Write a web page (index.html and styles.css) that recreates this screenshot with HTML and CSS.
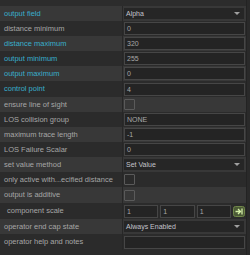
FILE: index.html
```html
<!DOCTYPE html>
<html>
<head>
<meta charset="utf-8">
<link rel="stylesheet" href="styles.css">
</head>
<body>
<div class="wrap">
  <div class="panel">
    <div class="row light"><div class="lbl hi">output field</div><div class="val"><div class="select"><span>Alpha</span><span class="arrow"></span></div></div></div>
    <div class="row dark"><div class="lbl">distance minimum</div><div class="val"><div class="input">0</div></div></div>
    <div class="row light"><div class="lbl hi">distance maximum</div><div class="val"><div class="input">320</div></div></div>
    <div class="row dark"><div class="lbl hi">output minimum</div><div class="val"><div class="input">255</div></div></div>
    <div class="row light"><div class="lbl hi">output maximum</div><div class="val"><div class="input">0</div></div></div>
    <div class="row dark r16"><div class="lbl hi">control point</div><div class="val"><div class="input">4</div></div></div>
    <div class="row light"><div class="lbl">ensure line of sight</div><div class="val"><div class="check"></div></div></div>
    <div class="row dark"><div class="lbl">LOS collision group</div><div class="val"><div class="input">NONE</div></div></div>
    <div class="row light"><div class="lbl">maximum trace length</div><div class="val"><div class="input">-1</div></div></div>
    <div class="row dark"><div class="lbl">LOS Failure Scalar</div><div class="val"><div class="input">0</div></div></div>
    <div class="row light"><div class="lbl">set value method</div><div class="val"><div class="select"><span>Set Value</span><span class="arrow"></span></div></div></div>
    <div class="row dark"><div class="lbl">only active with...ecified distance</div><div class="val"><div class="check"></div></div></div>
    <div class="row light r16"><div class="lbl">output is additive</div><div class="val"><div class="check"></div></div></div>
    <div class="row dark r16"><div class="lbl indent">component scale</div><div class="val"><div class="triple"><div class="input">1</div><div class="input">1</div><div class="input">1</div><span class="apply"><svg width="12" height="11" viewBox="0 0 12 11"><rect x="0.5" y="0.5" width="11" height="10" rx="2" fill="#4b5a36" stroke="#6f8648"/><path d="M2.5 5.5H7M5 3L7.5 5.5L5 8" fill="none" stroke="#d6f0a8" stroke-width="1.3"/><path d="M9 2.5V8.5" stroke="#d6f0a8" stroke-width="1.3"/></svg></span></div></div></div>
    <div class="row light"><div class="lbl">operator end cap state</div><div class="val"><div class="select"><span>Always Enabled</span><span class="arrow"></span></div></div></div>
    <div class="row dark r16"><div class="lbl">operator help and notes</div><div class="val"><div class="input"></div></div></div>
  </div>
  <div class="scroll"></div>
</div>
</body>
</html>
```
FILE: styles.css
```css
html, body {
  margin: 0;
  padding: 0;
  background: #2b2b2b;
  width: 250px;
  height: 255px;
  overflow: hidden;
  font-family: "Liberation Sans", Arial, sans-serif;
}
.wrap {
  display: flex;
  width: 250px;
  height: 255px;
}
.panel {
  width: 246px;
  padding-top: 6px;
  background: #2c2c2c;
}
.scroll {
  width: 3px;
  border-left: 1px solid #232323;
  background: #2a2a2a;
}
.row {
  display: grid;
  grid-template-columns: 123px 1fr;
  height: 15px;
}
.row.r16 { height: 16px; }
.light { background: #383838; }
.dark { background: #2b2b2b; }
.lbl {
  border-right: 1px solid #272727;
  padding-left: 4px;
  font-size: 7.5px;
  line-height: 15px;
  color: #a6a6a6;
  white-space: nowrap;
  overflow: hidden;
}
.r16 .lbl { line-height: 16px; }
.lbl.hi { color: #38aecb; }
.lbl.indent { padding-left: 7px; }
.val {
  display: flex;
  align-items: center;
  padding: 0 1px 0 1px;
}
.input {
  flex: 1;
  height: 11px;
  background: #242424;
  border: 1px solid #464646;
  color: #a8a8a8;
  font-size: 7px;
  line-height: 11px;
  padding-left: 2px;
  box-sizing: content-box;
}
.select {
  flex: 1;
  height: 11px;
  margin-right: 1px;
  background: #262626;
  color: #c4c4cc;
  font-size: 7px;
  line-height: 11px;
  padding-left: 2px;
  display: flex;
  justify-content: space-between;
  align-items: center;
}
.arrow {
  width: 0;
  height: 0;
  margin-right: 4px;
  border-left: 3px solid transparent;
  border-right: 3px solid transparent;
  border-top: 3px solid #a0a0a0;
}
.check {
  width: 9px;
  height: 9px;
  border: 1px solid #5a5a5a;
  border-radius: 1px;
  margin-left: 0;
}
.triple {
  flex: 1;
  display: flex;
  gap: 2px;
  align-items: center;
}
.triple .input { flex: 1; min-width: 0; }
.apply {
  display: flex;
  width: 12px;
  height: 11px;
}
```
